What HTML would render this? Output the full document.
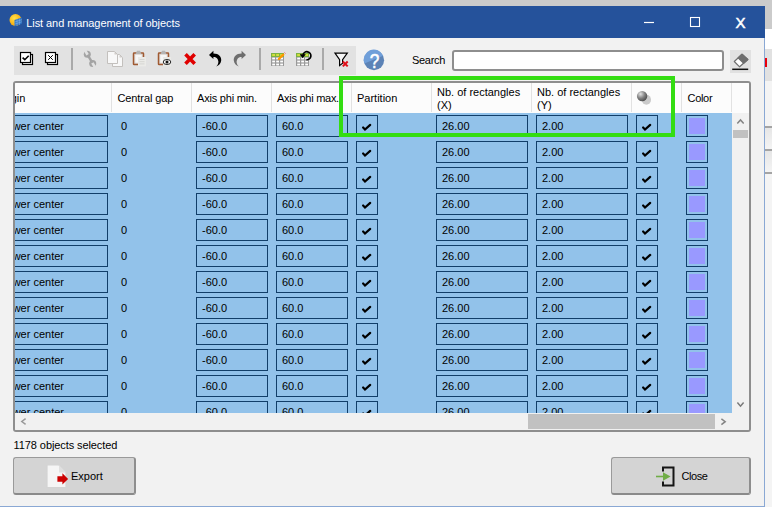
<!DOCTYPE html>
<html><head><meta charset="utf-8"><title>List and management of objects</title>
<style>
html,body{margin:0;padding:0}
body{width:772px;height:507px;overflow:hidden;position:relative;background:#f2f2f2;font-family:"Liberation Sans",sans-serif;font-size:11px;color:#000;line-height:13px}
div,span,svg,b,i{position:absolute;box-sizing:border-box}
i{position:static;font-style:normal}
#topstrip{left:0;top:0;width:772px;height:6px;background:#cbcbcb}
#title{left:0;top:6px;width:765px;height:32px;background:#25529b;color:#fff}
#title .t{left:26.3px;top:11px;white-space:nowrap;letter-spacing:-0.08px}
#rstrip{left:765px;top:0;width:7px;height:507px;background:#f4f4f4}
#win{left:0;top:38px;width:765px;height:469px;border-right:1px solid #8aa8d4;border-bottom:1px solid #8aa8d4;background:#f2f2f2}
#tb{left:14px;top:46px;width:342px;height:29px;background:#e2e2e2}
.sep{top:48px;width:2px;height:22px;background:#a9a9a9}
#search{left:412px;top:54px;letter-spacing:-0.3px}
#inp{left:452px;top:50px;width:272px;height:21px;border:2px solid #8e8e8e;border-radius:3px;background:#fff}
#erase{left:730px;top:50px;width:21px;height:23px;background:#e1e1e1}
#frame{left:13px;top:81px;width:738px;height:351px;border:2px solid #8e8e8e;border-radius:3px;background:#f0f0f0;overflow:hidden}
#tbl{left:0;top:0;width:734px;height:347px;overflow:hidden}
#hdr{left:0;top:0;width:734px;height:30px;background:#fcfcfc}
#hdr .hs{top:0;width:1px;height:29px;background:#e2e2e2}
#hdr .h{white-space:nowrap}
#rows{left:0;top:30px;width:717px;height:300px;background:#92c2ea;overflow:hidden}
.row{left:0;width:717px;height:26px;margin-top:-30px}
.bx{top:2px;height:22px;border:1px solid #113e69;overflow:hidden}
.bx span{left:5px;top:4px;white-space:nowrap}
.plain{top:7px}
.ck svg{left:0;top:0}
.col b{left:2px;top:2px;width:16px;height:16px;background:#9999ff}
.btn{top:457px;height:38px;background:#d4d4d4;border:1px solid #9a9a9a;border-bottom:2px solid #8a8a8a;border-right:2px solid #8e8e8e;border-radius:3px}
</style></head><body>
<div id="topstrip"></div>
<div id="rstrip">
 <div style="left:0;top:0;width:7px;height:29px;background:#cbcbcb"></div>
 <div style="left:0;top:29px;width:7px;height:20px;background:#fff"></div>
 <div style="left:0;top:49px;width:7px;height:32px;background:#e1e1e1"></div>
 <div style="left:0;top:58px;width:1.6px;height:9px;background:#e8000c"></div>
 <div style="left:0;top:126px;width:7px;height:2px;background:#a4a4a4"></div>
 <div style="left:0;top:128px;width:7px;height:21px;background:linear-gradient(#e6e6e6,#f4f4f4)"></div>
 <div style="left:0;top:149px;width:7px;height:2px;background:#a4a4a4"></div>
 <div style="left:0;top:151px;width:7px;height:21px;background:linear-gradient(#e6e6e6,#f4f4f4)"></div>
 <div style="left:0;top:172px;width:7px;height:2px;background:#a4a4a4"></div>
</div>
<div id="win"></div>
<div id="title"><span class="t">List and management of objects</span>
 <svg style="left:9px;top:7px" width="15" height="15" viewBox="0 0 15 15">
  <defs><radialGradient id="sun" cx="40%" cy="35%" r="70%"><stop offset="0" stop-color="#ffe14a"/><stop offset="1" stop-color="#f5a000"/></radialGradient></defs>
  <circle cx="6.5" cy="7" r="6" fill="url(#sun)"/>
  <path d="M5.5 7 L12.8 4.6 L12.8 10.8 L5.5 13.4 Z" fill="#2f74c5"/>
  <path d="M5.5 9.1 L12.8 6.7 M5.5 11.2 L12.8 8.8 M8 6.2 L8 12.5 M10.4 5.4 L10.4 11.7" stroke="#7fb2ea" stroke-width="0.6" fill="none"/>
 </svg>
 <svg style="left:640px;top:10px" width="20" height="12" viewBox="0 0 20 12"><path d="M4 6.5 H14" stroke="#fff" stroke-width="1.2"/></svg>
 <svg style="left:688px;top:9px" width="14" height="14" viewBox="0 0 14 14"><rect x="2.5" y="2.5" width="9" height="9" fill="none" stroke="#fff" stroke-width="1.1"/></svg>
 <span style="left:735.6px;top:8px;font-size:15px;line-height:18px;-webkit-text-stroke:0.5px #fff">X</span>
</div>

<div id="tb"></div>
<div class="sep" style="left:71px"></div>
<div class="sep" style="left:259px"></div>
<div class="sep" style="left:322px"></div>
<svg id="ticons" style="left:0;top:40px" width="400" height="40" viewBox="0 40 400 40">
 <defs><linearGradient id="hg" x1="0" y1="0" x2="1" y2="0"><stop offset="0" stop-color="#6f9fd8"/><stop offset="1" stop-color="#6f9fd8"/></linearGradient></defs>
 <!-- check all -->
 <rect x="22.5" y="54.5" width="10" height="10" fill="#fff" stroke="#000" stroke-width="1.2"/>
 <rect x="20.5" y="52.5" width="10" height="10" fill="#fff" stroke="#000" stroke-width="1.2"/>
 <path d="M22.6 57.6 L24.8 59.7 L28.7 55.8" fill="none" stroke="#000" stroke-width="1.6"/>
 <!-- uncheck all -->
 <rect x="47.5" y="54.5" width="10" height="10" fill="#fff" stroke="#000" stroke-width="1.2"/>
 <rect x="45.5" y="52.5" width="10" height="10" fill="#fff" stroke="#000" stroke-width="1.2"/>
 <path d="M48.2 55.2 L52.8 59.8 M52.8 55.2 L48.2 59.8" fill="none" stroke="#000" stroke-width="1"/>
 <!-- wrench -->
 <g>
  <path d="M87.3 54.3 L92.7 63.4" stroke="#a4a4a4" stroke-width="2.4" fill="none"/>
  <circle cx="87.3" cy="54.3" r="3.5" fill="#a4a4a4"/>
  <circle cx="92.7" cy="63.4" r="3.5" fill="#a4a4a4"/>
  <path d="M87.6 54.8 L85.0 50.4" stroke="#e2e2e2" stroke-width="2.7" fill="none"/>
  <path d="M92.4 62.9 L95.0 67.3" stroke="#e2e2e2" stroke-width="2.7" fill="none"/>
 </g>
 <!-- copy -->
 <g fill="#f8f8f8" stroke="#c3c0bd" stroke-width="1">
  <path d="M112.5 54.5 H119.5 L122.5 57.5 V66.5 H112.5 Z"/>
  <path d="M107.5 51.5 H114.5 L117.5 54.5 V63.5 H107.5 Z"/>
 </g>
 <path d="M114.5 52 V54.5 H117 Z M119.5 55 V57.5 H122 Z" fill="#cfcac6"/>
 <!-- paste -->
 <g>
  <rect x="133.5" y="53.1" width="10" height="11.4" rx="0.6" fill="#dcd6d2" stroke="#a05a32" stroke-width="1.5"/><rect x="135.3" y="54.9" width="6.4" height="7.8" fill="#f7f7f7"/>
  <path d="M135.6 54 L137 50.8 H140 L141.4 54 Z" fill="#b4b4b4"/>
  <rect x="138" y="57" width="8" height="9.4" fill="#ebebe8"/>
  <path d="M139.5 59.5 H144.5 M139.5 61.7 H144.5 M139.5 63.9 H144.5" stroke="#d4d4d0" stroke-width="0.9"/>
 </g>
 <!-- paste special -->
 <g>
  <rect x="158.5" y="53.1" width="10" height="11.4" rx="0.6" fill="#dcd6d2" stroke="#a05a32" stroke-width="1.5"/><rect x="160.3" y="54.9" width="6.4" height="7.8" fill="#f7f7f7"/>
  <path d="M160.6 54 L162 50.8 H165 L166.4 54 Z" fill="#b4b4b4"/>
  <rect x="163" y="57" width="8" height="9.4" fill="#e9e9e6"/>
  <ellipse cx="167" cy="62" rx="3.8" ry="2.5" fill="#f4f4f4" stroke="#111" stroke-width="0.9"/>
  <circle cx="167" cy="62" r="1.5" fill="#111"/>
 </g>
 <!-- delete -->
 <path d="M185.5 54.3 L194.7 63.7 M194.7 54.3 L185.5 63.7" stroke="#e00000" stroke-width="3.6" fill="none"/>
 <!-- undo -->
 <path d="M209 54.9 L213.4 50.8 V53.4 C219 53.4 221.6 57 221.2 60.6 C220.9 63.4 219 65.6 216.2 66.6 C218.4 64.4 219 61.6 217.8 59.4 C216.9 57.6 215.3 57 213.4 57 V59 Z" fill="#000"/>
 <!-- redo -->
 <path d="M246 54.9 L241.6 50.8 V53.4 C236 53.4 233.4 57 233.8 60.6 C234.1 63.4 236 65.6 238.8 66.6 C236.6 64.4 236 61.6 237.2 59.4 C238.1 57.6 239.7 57 241.6 57 V59 Z" fill="#6e6e6e"/>
 <!-- table edit -->
 <g>
  <rect x="271" y="53" width="13" height="13" fill="#999"/>
  <rect x="271" y="53" width="13" height="4" fill="#7cb342"/>
  <g fill="#d4de3e"><rect x="272.2" y="54" width="2.8" height="2"/><rect x="276.2" y="54" width="2.8" height="2"/><rect x="280.2" y="54" width="2.8" height="2"/></g>
  <g fill="#fff">
   <rect x="272.2" y="57.6" width="2.8" height="1.8"/><rect x="276.2" y="57.6" width="2.8" height="1.8"/><rect x="280.2" y="57.6" width="2.8" height="1.8"/>
   <rect x="272.2" y="60.6" width="2.8" height="1.8"/><rect x="276.2" y="60.6" width="2.8" height="1.8"/><rect x="280.2" y="60.6" width="2.8" height="1.8"/>
   <rect x="272.2" y="63.6" width="2.8" height="1.8"/><rect x="276.2" y="63.6" width="2.8" height="1.8"/><rect x="280.2" y="63.6" width="2.8" height="1.8"/>
  </g>
  <path d="M278.8 59 L283.3 54.6" stroke="#ff9800" stroke-width="2.2" stroke-linecap="round"/>
  <path d="M284.4 52.4 L285.6 53.6" stroke="#f0707a" stroke-width="1"/>
 </g>
 <!-- table reset -->
 <g>
  <rect x="296" y="53" width="13" height="13" fill="#999"/>
  <rect x="296" y="53" width="13" height="4" fill="#7cb342"/>
  <g fill="#d4de3e"><rect x="297.2" y="54" width="2.8" height="2"/><rect x="301.2" y="54" width="2.8" height="2"/><rect x="305.2" y="54" width="2.8" height="2"/></g>
  <g fill="#fff">
   <rect x="297.2" y="57.6" width="2.8" height="1.8"/><rect x="301.2" y="57.6" width="2.8" height="1.8"/><rect x="305.2" y="57.6" width="2.8" height="1.8"/>
   <rect x="297.2" y="60.6" width="2.8" height="1.8"/><rect x="301.2" y="60.6" width="2.8" height="1.8"/><rect x="305.2" y="60.6" width="2.8" height="1.8"/>
   <rect x="297.2" y="63.6" width="2.8" height="1.8"/><rect x="301.2" y="63.6" width="2.8" height="1.8"/><rect x="305.2" y="63.6" width="2.8" height="1.8"/>
  </g>
  <path d="M303 54.8 A4 4 0 1 1 306.4 59.7" fill="none" stroke="#000" stroke-width="1.7"/>
  <path d="M299.8 54.2 H305.8 L302.6 58.2 Z" fill="#000"/>
 </g>
 <!-- filter -->
 <path d="M335 53.2 H347.3 L342.6 59.6 V63.2 L339.6 65.6 V59.6 Z" fill="#f6f6f6" stroke="#000" stroke-width="1.2" stroke-linejoin="miter"/>
 <path d="M342.8 61.5 L347.7 66.4 M347.7 61.5 L342.8 66.4" stroke="#e0101a" stroke-width="2" fill="none"/>
 <!-- help -->
 <circle cx="374" cy="60.2" r="10.1" fill="#5c83b6"/>
 <path d="M364.4 63.5 A10.1 10.1 0 0 1 383.2 55.8 Z" fill="#709fd9"/>
</svg>
<span style="left:368.8px;top:50px;font-size:19.5px;line-height:22px;color:#fff;-webkit-text-stroke:0.5px #fff;transform:scaleX(0.88);transform-origin:50% 50%">?</span>

<span id="search">Search</span>
<div id="inp"></div>
<div id="erase">
 <svg width="21" height="23" viewBox="0 0 21 23" style="left:0;top:0">
  <path d="M12 4.3 L17.8 9.5 L9.6 16.8 L4.3 11.5 Z" fill="#fff" stroke="#6e6e6e" stroke-width="1.2" stroke-linejoin="round"/>
  <path d="M12 4.3 L17.8 9.5 L13.7 13.2 L8.1 7.9 Z" fill="#6e6e6e" stroke="#6e6e6e" stroke-width="1.2" stroke-linejoin="round"/>
  <path d="M2.2 19.3 H18.2" stroke="#111" stroke-width="1.5"/>
 </svg>
</div>

<div id="frame"><div id="tbl">
 <div id="hdr">
  <div class="hs" style="left:96px"></div><div class="hs" style="left:176px"></div><div class="hs" style="left:256px"></div>
  <div class="hs" style="left:336px"></div><div class="hs" style="left:416px"></div><div class="hs" style="left:516px"></div>
  <div class="hs" style="left:616px"></div><div class="hs" style="left:666px"></div><div class="hs" style="left:716px"></div>
  <div style="left:0;top:0;width:13px;height:29px;overflow:hidden"><span class="h" style="left:-19px;top:9px">Origin</span></div>
  <span class="h" style="left:102.4px;top:9px;letter-spacing:-0.08px">Central gap</span>
  <span class="h" style="left:182px;top:9px;letter-spacing:-0.2px">Axis phi min.</span>
  <div style="left:257px;top:0;width:79px;height:29px;overflow:hidden"><span class="h" style="left:5px;top:9px;letter-spacing:-0.27px">Axis phi max.</span></div>
  <span class="h" style="left:342px;top:9px">Partition</span>
  <span class="h" style="left:422px;top:3px">Nb. of rectangles<br>(X)</span>
  <span class="h" style="left:522px;top:3px">Nb. of rectangles<br>(Y)</span>
  <svg style="left:620px;top:7px" width="18" height="18" viewBox="0 0 18 18">
   <defs><radialGradient id="sph" cx="35%" cy="30%" r="75%"><stop offset="0" stop-color="#e4e4e4"/><stop offset="0.55" stop-color="#808080"/><stop offset="1" stop-color="#4a4a4a"/></radialGradient></defs>
   <ellipse cx="11.4" cy="9.7" rx="4.6" ry="5" fill="#cacaca"/>
   <circle cx="7.1" cy="6.1" r="5.2" fill="url(#sph)"/>
  </svg>
  <span class="h" style="left:672.5px;top:9px;letter-spacing:-0.3px">Color</span>
 </div>
 <div id="rows">
<div class="row" style="top:30px"><div class="bx" style="left:-3px;width:96px"><span style="left:-12.6px"><i class="lo">Lo</i>wer center</span></div><span class="plain" style="left:106px">0</span><div class="bx" style="left:181px;width:72px"><span>-60.0</span></div><div class="bx" style="left:261px;width:72px"><span>60.0</span></div><div class="bx ck" style="left:341px;width:22px"><svg width="20" height="20" viewBox="0 0 20 20"><path d="M6.1 11.5 L8.0 13.5 L13.2 8.9" fill="none" stroke="#000" stroke-width="2.2" stroke-linecap="round" stroke-linejoin="miter"/></svg></div><div class="bx" style="left:421px;width:92px"><span>26.00</span></div><div class="bx" style="left:521px;width:92px"><span>2.00</span></div><div class="bx ck" style="left:621px;width:22px"><svg width="20" height="20" viewBox="0 0 20 20"><path d="M6.1 11.5 L8.0 13.5 L13.2 8.9" fill="none" stroke="#000" stroke-width="2.2" stroke-linecap="round" stroke-linejoin="miter"/></svg></div><div class="bx col" style="left:671px;width:22px"><b></b></div></div>
<div class="row" style="top:56px"><div class="bx" style="left:-3px;width:96px"><span style="left:-12.6px"><i class="lo">Lo</i>wer center</span></div><span class="plain" style="left:106px">0</span><div class="bx" style="left:181px;width:72px"><span>-60.0</span></div><div class="bx" style="left:261px;width:72px"><span>60.0</span></div><div class="bx ck" style="left:341px;width:22px"><svg width="20" height="20" viewBox="0 0 20 20"><path d="M6.1 11.5 L8.0 13.5 L13.2 8.9" fill="none" stroke="#000" stroke-width="2.2" stroke-linecap="round" stroke-linejoin="miter"/></svg></div><div class="bx" style="left:421px;width:92px"><span>26.00</span></div><div class="bx" style="left:521px;width:92px"><span>2.00</span></div><div class="bx ck" style="left:621px;width:22px"><svg width="20" height="20" viewBox="0 0 20 20"><path d="M6.1 11.5 L8.0 13.5 L13.2 8.9" fill="none" stroke="#000" stroke-width="2.2" stroke-linecap="round" stroke-linejoin="miter"/></svg></div><div class="bx col" style="left:671px;width:22px"><b></b></div></div>
<div class="row" style="top:82px"><div class="bx" style="left:-3px;width:96px"><span style="left:-12.6px"><i class="lo">Lo</i>wer center</span></div><span class="plain" style="left:106px">0</span><div class="bx" style="left:181px;width:72px"><span>-60.0</span></div><div class="bx" style="left:261px;width:72px"><span>60.0</span></div><div class="bx ck" style="left:341px;width:22px"><svg width="20" height="20" viewBox="0 0 20 20"><path d="M6.1 11.5 L8.0 13.5 L13.2 8.9" fill="none" stroke="#000" stroke-width="2.2" stroke-linecap="round" stroke-linejoin="miter"/></svg></div><div class="bx" style="left:421px;width:92px"><span>26.00</span></div><div class="bx" style="left:521px;width:92px"><span>2.00</span></div><div class="bx ck" style="left:621px;width:22px"><svg width="20" height="20" viewBox="0 0 20 20"><path d="M6.1 11.5 L8.0 13.5 L13.2 8.9" fill="none" stroke="#000" stroke-width="2.2" stroke-linecap="round" stroke-linejoin="miter"/></svg></div><div class="bx col" style="left:671px;width:22px"><b></b></div></div>
<div class="row" style="top:108px"><div class="bx" style="left:-3px;width:96px"><span style="left:-12.6px"><i class="lo">Lo</i>wer center</span></div><span class="plain" style="left:106px">0</span><div class="bx" style="left:181px;width:72px"><span>-60.0</span></div><div class="bx" style="left:261px;width:72px"><span>60.0</span></div><div class="bx ck" style="left:341px;width:22px"><svg width="20" height="20" viewBox="0 0 20 20"><path d="M6.1 11.5 L8.0 13.5 L13.2 8.9" fill="none" stroke="#000" stroke-width="2.2" stroke-linecap="round" stroke-linejoin="miter"/></svg></div><div class="bx" style="left:421px;width:92px"><span>26.00</span></div><div class="bx" style="left:521px;width:92px"><span>2.00</span></div><div class="bx ck" style="left:621px;width:22px"><svg width="20" height="20" viewBox="0 0 20 20"><path d="M6.1 11.5 L8.0 13.5 L13.2 8.9" fill="none" stroke="#000" stroke-width="2.2" stroke-linecap="round" stroke-linejoin="miter"/></svg></div><div class="bx col" style="left:671px;width:22px"><b></b></div></div>
<div class="row" style="top:134px"><div class="bx" style="left:-3px;width:96px"><span style="left:-12.6px"><i class="lo">Lo</i>wer center</span></div><span class="plain" style="left:106px">0</span><div class="bx" style="left:181px;width:72px"><span>-60.0</span></div><div class="bx" style="left:261px;width:72px"><span>60.0</span></div><div class="bx ck" style="left:341px;width:22px"><svg width="20" height="20" viewBox="0 0 20 20"><path d="M6.1 11.5 L8.0 13.5 L13.2 8.9" fill="none" stroke="#000" stroke-width="2.2" stroke-linecap="round" stroke-linejoin="miter"/></svg></div><div class="bx" style="left:421px;width:92px"><span>26.00</span></div><div class="bx" style="left:521px;width:92px"><span>2.00</span></div><div class="bx ck" style="left:621px;width:22px"><svg width="20" height="20" viewBox="0 0 20 20"><path d="M6.1 11.5 L8.0 13.5 L13.2 8.9" fill="none" stroke="#000" stroke-width="2.2" stroke-linecap="round" stroke-linejoin="miter"/></svg></div><div class="bx col" style="left:671px;width:22px"><b></b></div></div>
<div class="row" style="top:160px"><div class="bx" style="left:-3px;width:96px"><span style="left:-12.6px"><i class="lo">Lo</i>wer center</span></div><span class="plain" style="left:106px">0</span><div class="bx" style="left:181px;width:72px"><span>-60.0</span></div><div class="bx" style="left:261px;width:72px"><span>60.0</span></div><div class="bx ck" style="left:341px;width:22px"><svg width="20" height="20" viewBox="0 0 20 20"><path d="M6.1 11.5 L8.0 13.5 L13.2 8.9" fill="none" stroke="#000" stroke-width="2.2" stroke-linecap="round" stroke-linejoin="miter"/></svg></div><div class="bx" style="left:421px;width:92px"><span>26.00</span></div><div class="bx" style="left:521px;width:92px"><span>2.00</span></div><div class="bx ck" style="left:621px;width:22px"><svg width="20" height="20" viewBox="0 0 20 20"><path d="M6.1 11.5 L8.0 13.5 L13.2 8.9" fill="none" stroke="#000" stroke-width="2.2" stroke-linecap="round" stroke-linejoin="miter"/></svg></div><div class="bx col" style="left:671px;width:22px"><b></b></div></div>
<div class="row" style="top:186px"><div class="bx" style="left:-3px;width:96px"><span style="left:-12.6px"><i class="lo">Lo</i>wer center</span></div><span class="plain" style="left:106px">0</span><div class="bx" style="left:181px;width:72px"><span>-60.0</span></div><div class="bx" style="left:261px;width:72px"><span>60.0</span></div><div class="bx ck" style="left:341px;width:22px"><svg width="20" height="20" viewBox="0 0 20 20"><path d="M6.1 11.5 L8.0 13.5 L13.2 8.9" fill="none" stroke="#000" stroke-width="2.2" stroke-linecap="round" stroke-linejoin="miter"/></svg></div><div class="bx" style="left:421px;width:92px"><span>26.00</span></div><div class="bx" style="left:521px;width:92px"><span>2.00</span></div><div class="bx ck" style="left:621px;width:22px"><svg width="20" height="20" viewBox="0 0 20 20"><path d="M6.1 11.5 L8.0 13.5 L13.2 8.9" fill="none" stroke="#000" stroke-width="2.2" stroke-linecap="round" stroke-linejoin="miter"/></svg></div><div class="bx col" style="left:671px;width:22px"><b></b></div></div>
<div class="row" style="top:212px"><div class="bx" style="left:-3px;width:96px"><span style="left:-12.6px"><i class="lo">Lo</i>wer center</span></div><span class="plain" style="left:106px">0</span><div class="bx" style="left:181px;width:72px"><span>-60.0</span></div><div class="bx" style="left:261px;width:72px"><span>60.0</span></div><div class="bx ck" style="left:341px;width:22px"><svg width="20" height="20" viewBox="0 0 20 20"><path d="M6.1 11.5 L8.0 13.5 L13.2 8.9" fill="none" stroke="#000" stroke-width="2.2" stroke-linecap="round" stroke-linejoin="miter"/></svg></div><div class="bx" style="left:421px;width:92px"><span>26.00</span></div><div class="bx" style="left:521px;width:92px"><span>2.00</span></div><div class="bx ck" style="left:621px;width:22px"><svg width="20" height="20" viewBox="0 0 20 20"><path d="M6.1 11.5 L8.0 13.5 L13.2 8.9" fill="none" stroke="#000" stroke-width="2.2" stroke-linecap="round" stroke-linejoin="miter"/></svg></div><div class="bx col" style="left:671px;width:22px"><b></b></div></div>
<div class="row" style="top:238px"><div class="bx" style="left:-3px;width:96px"><span style="left:-12.6px"><i class="lo">Lo</i>wer center</span></div><span class="plain" style="left:106px">0</span><div class="bx" style="left:181px;width:72px"><span>-60.0</span></div><div class="bx" style="left:261px;width:72px"><span>60.0</span></div><div class="bx ck" style="left:341px;width:22px"><svg width="20" height="20" viewBox="0 0 20 20"><path d="M6.1 11.5 L8.0 13.5 L13.2 8.9" fill="none" stroke="#000" stroke-width="2.2" stroke-linecap="round" stroke-linejoin="miter"/></svg></div><div class="bx" style="left:421px;width:92px"><span>26.00</span></div><div class="bx" style="left:521px;width:92px"><span>2.00</span></div><div class="bx ck" style="left:621px;width:22px"><svg width="20" height="20" viewBox="0 0 20 20"><path d="M6.1 11.5 L8.0 13.5 L13.2 8.9" fill="none" stroke="#000" stroke-width="2.2" stroke-linecap="round" stroke-linejoin="miter"/></svg></div><div class="bx col" style="left:671px;width:22px"><b></b></div></div>
<div class="row" style="top:264px"><div class="bx" style="left:-3px;width:96px"><span style="left:-12.6px"><i class="lo">Lo</i>wer center</span></div><span class="plain" style="left:106px">0</span><div class="bx" style="left:181px;width:72px"><span>-60.0</span></div><div class="bx" style="left:261px;width:72px"><span>60.0</span></div><div class="bx ck" style="left:341px;width:22px"><svg width="20" height="20" viewBox="0 0 20 20"><path d="M6.1 11.5 L8.0 13.5 L13.2 8.9" fill="none" stroke="#000" stroke-width="2.2" stroke-linecap="round" stroke-linejoin="miter"/></svg></div><div class="bx" style="left:421px;width:92px"><span>26.00</span></div><div class="bx" style="left:521px;width:92px"><span>2.00</span></div><div class="bx ck" style="left:621px;width:22px"><svg width="20" height="20" viewBox="0 0 20 20"><path d="M6.1 11.5 L8.0 13.5 L13.2 8.9" fill="none" stroke="#000" stroke-width="2.2" stroke-linecap="round" stroke-linejoin="miter"/></svg></div><div class="bx col" style="left:671px;width:22px"><b></b></div></div>
<div class="row" style="top:290px"><div class="bx" style="left:-3px;width:96px"><span style="left:-12.6px"><i class="lo">Lo</i>wer center</span></div><span class="plain" style="left:106px">0</span><div class="bx" style="left:181px;width:72px"><span>-60.0</span></div><div class="bx" style="left:261px;width:72px"><span>60.0</span></div><div class="bx ck" style="left:341px;width:22px"><svg width="20" height="20" viewBox="0 0 20 20"><path d="M6.1 11.5 L8.0 13.5 L13.2 8.9" fill="none" stroke="#000" stroke-width="2.2" stroke-linecap="round" stroke-linejoin="miter"/></svg></div><div class="bx" style="left:421px;width:92px"><span>26.00</span></div><div class="bx" style="left:521px;width:92px"><span>2.00</span></div><div class="bx ck" style="left:621px;width:22px"><svg width="20" height="20" viewBox="0 0 20 20"><path d="M6.1 11.5 L8.0 13.5 L13.2 8.9" fill="none" stroke="#000" stroke-width="2.2" stroke-linecap="round" stroke-linejoin="miter"/></svg></div><div class="bx col" style="left:671px;width:22px"><b></b></div></div>
<div class="row" style="top:316px"><div class="bx" style="left:-3px;width:96px"><span style="left:-12.6px"><i class="lo">Lo</i>wer center</span></div><span class="plain" style="left:106px">0</span><div class="bx" style="left:181px;width:72px"><span>-60.0</span></div><div class="bx" style="left:261px;width:72px"><span>60.0</span></div><div class="bx ck" style="left:341px;width:22px"><svg width="20" height="20" viewBox="0 0 20 20"><path d="M6.1 11.5 L8.0 13.5 L13.2 8.9" fill="none" stroke="#000" stroke-width="2.2" stroke-linecap="round" stroke-linejoin="miter"/></svg></div><div class="bx" style="left:421px;width:92px"><span>26.00</span></div><div class="bx" style="left:521px;width:92px"><span>2.00</span></div><div class="bx ck" style="left:621px;width:22px"><svg width="20" height="20" viewBox="0 0 20 20"><path d="M6.1 11.5 L8.0 13.5 L13.2 8.9" fill="none" stroke="#000" stroke-width="2.2" stroke-linecap="round" stroke-linejoin="miter"/></svg></div><div class="bx col" style="left:671px;width:22px"><b></b></div></div>
 </div>
 <!-- vertical scrollbar -->
 <div style="left:717px;top:30px;width:17px;height:300px;background:#f1f1f1">
  <svg style="left:0;top:0" width="17" height="300" viewBox="0 0 17 300">
   <path d="M5.3 10.6 L8.5 7 L11.7 10.6" fill="none" stroke="#858585" stroke-width="1.5"/>
   <rect x="1" y="17" width="15" height="8" fill="#c1c1c1"/>
   <path d="M5.4 289.6 L8.5 293.2 L11.6 289.6" fill="none" stroke="#7a7a7a" stroke-width="1.5"/>
  </svg>
 </div>
 <!-- horizontal scrollbar -->
 <div style="left:0;top:330px;width:734px;height:17px;background:#f1f1f1">
  <svg style="left:0;top:0" width="734" height="17" viewBox="0 0 734 17">
   <path d="M10.6 5.6 L6.8 8.5 L10.6 11.4" fill="none" stroke="#9a9a9a" stroke-width="1.5"/>
   <rect x="513" y="1" width="187" height="15" fill="#c1c1c1"/>
   <path d="M706.4 5.8 L710.2 8.7 L706.4 11.6" fill="none" stroke="#858585" stroke-width="1.5"/>
  </svg>
 </div>
</div></div>

<div id="green" style="left:339px;top:76px;width:336px;height:61px;border:4px solid #33dd11"></div>

<span style="left:13.6px;top:439px;white-space:nowrap;letter-spacing:-0.09px">1178 objects selected</span>

<div class="btn" style="left:13px;width:123px">
 <svg style="left:32px;top:6px" width="24" height="25" viewBox="0 0 24 25">
  <path d="M1 1 H13 L20 8.5 V23.5 H1 Z" fill="#f5f5f5" stroke="#d3d3d3" stroke-width="1.2"/>
  <path d="M13 1 L13 8.5 L20 8.5 Z" fill="#e0e0e0"/>
  <path d="M11.4 12.2 H16.4 V9.2 L22.1 14.9 L16.4 20.6 V17.7 H11.4 Z" fill="#cc0000"/>
 </svg>
 <span style="left:57px;top:12px">Export</span>
</div>
<div class="btn" style="left:611px;width:140px">
 <svg style="left:42.5px;top:7px" width="22" height="24" viewBox="0 0 22 24">
  <path d="M8 6.5 V2.5 H18.5 V20.5 H8 V16.5" fill="none" stroke="#151515" stroke-width="2"/>
  <path d="M1 11.5 H9" stroke="#70ad47" stroke-width="1.6"/>
  <path d="M8 7.2 L15.6 11.5 L8 15.8 Z" fill="#70ad47"/>
 </svg>
 <span style="left:69.5px;top:12px;letter-spacing:-0.45px">Close</span>
</div>
</body></html>
